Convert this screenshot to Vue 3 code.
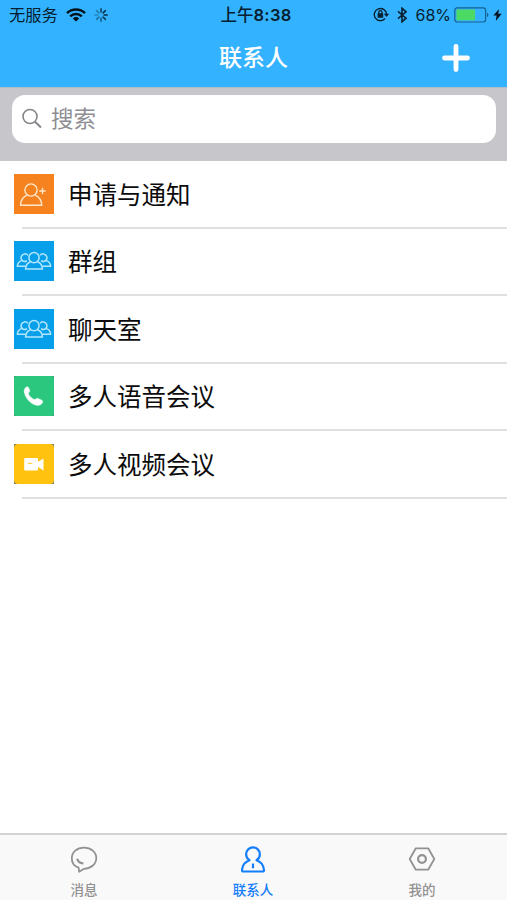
<script setup>
const rows = [
  { label: '申请与通知', icon: 'add', color: '#f5821f' },
  { label: '群组', icon: 'group', color: '#079fea' },
  { label: '聊天室', icon: 'group', color: '#079fea' },
  { label: '多人语音会议', icon: 'phone', color: '#2cc77f' },
  { label: '多人视频会议', icon: 'video', color: '#ffc20e' },
]
const tabs = [
  { label: '消息', icon: 'chat' },
  { label: '联系人', icon: 'contact', active: true },
  { label: '我的', icon: 'me' },
]
const spokes = [
  { angle: 0, opacity: 0.8 }, { angle: 45, opacity: 0.9 }, { angle: 90, opacity: 0.9 },
  { angle: 135, opacity: 0.8 }, { angle: 180, opacity: 0.6 }, { angle: 225, opacity: 0.45 },
  { angle: 270, opacity: 0.3 }, { angle: 315, opacity: 0.4 },
]
</script>

<template>
  <div class="screen">
    <header class="header">
      <div class="status">
        <div class="status-left">
          <span class="carrier">无服务</span>
          <svg class="wifi" width="20" height="14" viewBox="0 0 20 14">
            <g fill="none" stroke="#06131c" stroke-width="2.5">
              <path d="M1 5.1a12.9 12.9 0 0 1 18 0" />
              <path d="M4.2 8.4a8.3 8.3 0 0 1 11.6 0" />
            </g>
            <path d="M10 13.4 6.8 10.5a4.7 4.7 0 0 1 6.4 0z" fill="#06131c" />
          </svg>
          <svg class="spinner" width="14" height="14" viewBox="-7 -7 14 14">
            <path v-for="s in spokes" :key="s.angle" d="M0-3V-6.2" stroke="#06202f" stroke-width="1.5"
              stroke-linecap="round" :opacity="s.opacity" :transform="`rotate(${s.angle})`" />
          </svg>
        </div>
        <span class="time"><span class="meridiem">上午</span>8:38</span>
        <div class="status-right">
          <svg class="lock" width="17" height="15" viewBox="0 0 17 15">
            <path d="M12.1 11.5A6.1 6.1 0 1 1 13.5 7" fill="none" stroke="#08202f" stroke-width="1.4" />
            <path d="M10.8 6.8h5.4l-2.7 3.2z" fill="#08202f" />
            <rect x="4.6" y="6.3" width="5.6" height="4.4" rx=".5" fill="#08202f" />
            <path d="M5.8 7V5.2a1.6 1.6 0 0 1 3.2 0V7" fill="none" stroke="#08202f" stroke-width="1.2" />
          </svg>
          <svg class="bluetooth" width="10" height="16" viewBox="0 0 10 16">
            <path d="M1 4.4 9 11.2 5 14.8V1.2L9 4.8 1 11.6" fill="none" stroke="#08202f" stroke-width="1.6" />
          </svg>
          <span class="percent">68%</span>
          <svg class="battery" width="36" height="16" viewBox="0 0 36 16">
            <rect x=".8" y=".8" width="30.8" height="14.2" rx="2.4" fill="none" stroke="#17608d" stroke-width="1.2" />
            <rect x="2.5" y="2.5" width="18.6" height="10.8" rx=".8" fill="#4cd964" />
            <path d="M33 5.5q3 2.4 0 4.8z" fill="#17608d" />
          </svg>
          <svg class="bolt" width="9" height="12" viewBox="0 0 8 12" preserveAspectRatio="none">
            <path d="M5.4 0 .3 6.6h2.9L2.5 12 7.7 4.8H4.6z" fill="#06131c" />
          </svg>
        </div>
      </div>
      <div class="navbar">
        <h1>联系人</h1>
        <svg class="plus" width="28" height="28" viewBox="0 0 28 28">
          <path d="M14 2.5v23M2.5 14h23" stroke="#fff" stroke-width="4.8" stroke-linecap="round" />
        </svg>
      </div>
    </header>

    <div class="search-area">
      <div class="search">
        <svg width="22" height="22" viewBox="0 0 22 22" fill="none" stroke="#858589">
          <circle cx="9" cy="8.5" r="7" stroke-width="1.6" />
          <path d="m14 13.7 6 5.8" stroke-width="2" />
        </svg>
        <span>搜索</span>
      </div>
    </div>

    <main class="list">
      <div v-for="row in rows" :key="row.label" class="row">
        <div class="tile" :class="row.icon">
          <svg width="40" height="40" viewBox="0 0 40 40">
            <rect width="40" height="40" :rx="row.icon === 'video' ? 4 : row.icon === 'phone' ? 2 : 0" :fill="row.color" />
            <g v-if="row.icon === 'add'" fill="none" stroke="#ffe6c9" stroke-width="1.4" stroke-linejoin="round">
              <circle cx="17" cy="16" r="6.1" />
              <path d="M13 21.2c-4 1.8-6.2 5-6.5 10h21.3c-.3-5-2.5-8.2-6.6-10M25.3 17h6.4M28.5 13.8v6.4" />
            </g>
            <g v-else-if="row.icon === 'group'" fill="none" stroke="#b3e7ff" stroke-width="1.5" stroke-linejoin="round">
              <circle cx="20" cy="16.6" r="5.1" />
              <path d="M16.4 20.8c-3 1.1-4.5 3.3-4.9 7.2h17c-.4-3.9-1.9-6.1-4.9-7.2" />
              <path d="M13.9 14.2a3.9 3.9 0 1 0-3.7 6.4c1 0 2-.4 2.7-1M7.4 19.6c-2.4.9-3.7 2.6-4.1 5.6h8.4M26.1 14.2a3.9 3.9 0 1 1 3.7 6.4c-1 0-2-.4-2.7-1M32.6 19.6c2.4.9 3.7 2.6 4.1 5.6h-8.4" />
            </g>
            <path v-else-if="row.icon === 'phone'" fill="#fff" stroke="#fff" stroke-width=".6"
              d="M11.3 12.1c.6-.7 1.9-1.6 2.6-1.1.8.6 1.8 3.1 1.8 4.1 0 1-1.4 1.5-1.4 2.4.2 2.1 4.1 5.6 6.1 6.1 1.1.1 1.6-1.3 2.7-1.2 1.2.1 4.9 1.7 5.5 2.5.5.9-.8 2.9-1.9 3.7-1.8 1.3-5.9.7-9.2-1.6-3.3-2.2-6.1-6.3-7-9.9-.5-2.1-.2-3.9.8-5z" />
            <g v-else>
              <path fill="#fff" d="M11 14.1h12q1 0 1 1v2.6l5.5-3.2v12L24 23v2.8q0 .8-1 .8H11q-.8 0-.8-.8V15q0-.9.8-.9z" />
              <path d="M13.8 19.4h4.6" stroke="#ffd34e" stroke-width="1.2" />
            </g>
          </svg>
        </div>
        <span class="label">{{ row.label }}</span>
      </div>
    </main>

    <nav class="tabs">
      <div v-for="tab in tabs" :key="tab.label" class="tab" :class="{ active: tab.active }">
        <svg width="28" height="28" viewBox="0 0 28 28" fill="none" stroke="currentColor" stroke-width="1.8" stroke-linejoin="round">
          <g v-if="tab.icon === 'chat'">
            <path d="M8.6 22.6C4.4 21.2 1.8 17.7 1.8 13.2 1.8 7.2 7 2.6 14 2.6s12.3 4.5 12.3 10.4S21.2 23.6 14 23.8L9.2 26.8z" />
            <path d="M7.2 13.7c.7 2.8 3 4.4 6.2 4.6" stroke-width="2.2" />
          </g>
          <g v-else-if="tab.icon === 'contact'" stroke-width="2.2">
            <path d="M10.5 15.2A7 7 0 0 1 7.1 9.2 6.9 6.9 0 0 1 14 2.4a6.9 6.9 0 0 1 6.9 6.8 7 7 0 0 1-3.4 6c4.6 1.6 7.2 4.9 7.5 9.9q.1 1.4-1.4 1.4H4.4Q2.9 26.5 3 25.1c.3-5 2.9-8.3 7.5-9.9z" />
            <path d="M14 18.5v4.8" />
          </g>
          <g v-else>
            <path d="M7.8 3.3h12.4L26.3 14l-6.1 10.7H7.8L1.7 14z" />
            <circle cx="14" cy="14" r="3.9" stroke-width="2.2" />
          </g>
        </svg>
        <span>{{ tab.label }}</span>
      </div>
    </nav>
  </div>
</template>

<style>
body {
  margin: 0;
}
</style>

<style scoped>
.screen {
  display: flex;
  flex-direction: column;
  width: 507px;
  height: 900px;
  overflow: hidden;
  background: #fff;
  font-family: Inter, "Noto Sans CJK SC", sans-serif;
}
.header {
  height: 87px;
  flex: none;
  background: #33b3ff;
}
.status {
  display: grid;
  grid-template-columns: 1fr auto 1fr;
  align-items: center;
  height: 29px;
  padding: 0 6px 0 9px;
  color: #06202f;
}
.status-left,
.status-right {
  display: flex;
  align-items: center;
}
.status-right {
  justify-content: flex-end;
}
.carrier {
  font-size: 16.3px;
  line-height: 24px;
}
.wifi {
  margin-left: 8px;
}
.spinner {
  margin-left: 8px;
}
.time {
  padding-left: 2px;
  font-size: 16.5px;
  font-weight: 600;
  letter-spacing: 0.3px;
  line-height: 24px;
}
.meridiem {
  font-weight: 500;
  letter-spacing: 0;
}
.percent {
  margin: 0 4px 0 8px;
  font-size: 16px;
}
.bluetooth {
  margin-left: 8px;
}
.battery {
  margin-left: -1px;
}
.bolt {
  margin: 0 -1px 0 3px;
}
.lock {
  margin-right: -1px;
}
.navbar {
  display: grid;
  grid-template-columns: 1fr auto 1fr;
  align-items: center;
  height: 58px;
}
h1 {
  grid-column: 2;
  margin: 0;
  color: #fff;
  font-size: 23px;
  font-weight: 500;
  line-height: 34px;
}
.plus {
  justify-self: end;
  margin-right: 37px;
}
.search-area {
  flex: none;
  height: 74px;
  box-sizing: border-box;
  padding: 7px 11px 18px 12px;
  border-top: 1px solid #b4bcc8;
  background: #c7c6cb;
}
.search {
  display: flex;
  align-items: center;
  gap: 8px;
  height: 48px;
  box-sizing: border-box;
  padding-left: 9px;
  border-radius: 13px;
  background: #fff;
  color: #8e8e93;
  font-size: 22.5px;
}
.search span {
  margin-bottom: 5px;
}
.list {
  flex: 1;
}
.row {
  display: flex;
  align-items: center;
  height: 67.5px;
  box-sizing: border-box;
  padding: 0 0 2px 14px;
  background: linear-gradient(#e0e0e2, #e0e0e2) 22px 100% / 100% 2px no-repeat;
}
.tile {
  width: 40px;
  height: 40px;
}
.tile svg {
  display: block;
}
.phone,
.video {
  background: #6b786c;
}
.label {
  margin: 2px 0 0 14px;
  color: #0b0b0b;
  font-size: 24.5px;
  line-height: 36px;
}
.tabs {
  display: grid;
  grid-template-columns: repeat(3, 1fr);
  flex: none;
  height: 67px;
  box-sizing: border-box;
  border-top: 2px solid #d2d2d2;
  background: #f9f9f9;
}
.tab {
  display: flex;
  flex-direction: column;
  align-items: center;
  padding: 10px 1px 0 0;
  color: #929292;
  font-size: 13.5px;
  font-weight: 500;
  line-height: 20px;
}
.tab span {
  margin-top: 7px;
}
.active {
  color: #147efb;
}
</style>
